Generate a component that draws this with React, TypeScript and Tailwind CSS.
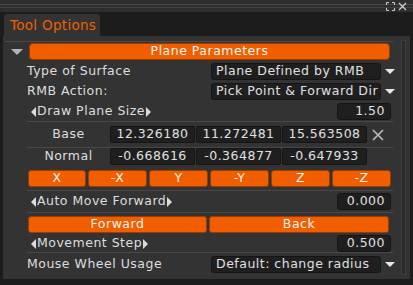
import React from "react";

const font = { fontFamily: "'DejaVu Sans', sans-serif" };

function Sep(props: { mt: string }) {
  return <div className={"ml-[24px] mr-[2px] h-px shrink-0 bg-[#484848] " + props.mt}></div>;
}

function Combo(props: { text: string }) {
  return (
    <div className="flex items-center">
      <div className="flex h-[17px] w-[170px] items-center rounded-[3px] border border-[#151515] bg-[#1f1f1f] pl-[4px] text-[12.5px] tracking-[0.5px] text-[#e0e0e0]">
        {props.text}
      </div>
      <div className="ml-[4px] h-0 w-0 border-x-[5px] border-t-[5px] border-x-transparent border-t-[#e8e8e8]"></div>
    </div>
  );
}

function Num(props: { text: string }) {
  return (
    <div className="flex h-[17px] w-[54px] items-center justify-end rounded-[3px] border border-[#151515] bg-[#1f1f1f] pr-[5px] text-[12.5px] tracking-[0.5px] text-[#e0e0e0]">
      {props.text}
    </div>
  );
}

function Arrow(props: { label: string }) {
  return (
    <div className="flex items-center">
      <span className="mr-[1px] h-0 w-0 border-y-[5px] border-r-[5px] border-y-transparent border-r-[#dcdcdc]"></span>
      <span>{props.label}</span>
      <span className="ml-[1px] h-0 w-0 border-y-[5px] border-l-[5px] border-y-transparent border-l-[#dcdcdc]"></span>
    </div>
  );
}

function Cell(props: { text: string }) {
  return (
    <div className="flex h-[17px] w-[85px] items-center justify-center rounded-[2px] border border-[#151515] bg-[#1f1f1f] text-[12.5px] tracking-[0.5px] text-[#e0e0e0]">
      {props.text}
    </div>
  );
}

function Btn(props: { text: string; w: string }) {
  return (
    <div
      className={
        "flex h-[17px] items-center justify-center rounded-[3px] border border-[#9c3d00] bg-[#f05e00] text-[12.5px] tracking-[0.5px] text-[#f4f4f4] " +
        props.w
      }>
      {props.text}
    </div>
  );
}

export default function App() {
  return (
    <div className="flex h-[285px] w-[413px] flex-col bg-[#1c1c1c]" style={font}>
      {/* title strip */}
      <div className="relative h-[12px] shrink-0 bg-[#2e2e2e]">
        <div className="absolute left-0 right-0 top-[4px] h-px bg-[#4a4a4a]"></div>
        <div className="absolute left-0 right-0 top-[7px] h-px bg-[#404040]"></div>
        <svg className="absolute left-[386px] top-[2px]" width="9" height="9" viewBox="0 0 9 9" fill="none" stroke="#cfcfcf" strokeWidth="1">
          <path d="M0.5 3V0.5H3M6 0.5H8.5V3M8.5 6V8.5H6M3 8.5H0.5V6" />
        </svg>
        <svg className="absolute left-[398px] top-[2px]" width="9" height="9" viewBox="0 0 9 9" fill="none" stroke="#cfcfcf" strokeWidth="1.2">
          <path d="M1 1L8 8M8 1L1 8" />
        </svg>
      </div>
      {/* tab row */}
      <div className="flex h-[24px] shrink-0 items-end pl-[4px]">
        <div className="flex h-[22px] w-[96px] items-center whitespace-nowrap rounded-t-[3px] bg-[#333333] pl-[6px] text-[13.5px] tracking-[0.3px] text-[#f06000]">
          Tool Options
        </div>
      </div>
      {/* panel */}
      <div className="mx-[3px] flex h-[243px] shrink-0 bg-[#333333] text-[12.5px] tracking-[0.5px] text-[#dedede]">
        <div className="flex flex-1 flex-col pt-[5px]">
          <div className="ml-[2px] mr-[2px] h-px shrink-0 bg-[#4a4a4a]"></div>
          {/* header */}
          <div className="mt-[1px] flex items-center">
            <div className="ml-[8px] mr-[6px] h-0 w-0 border-x-[6px] border-t-[6px] border-x-transparent border-t-[#b4b4b4]"></div>
            <div className="flex h-[17px] w-[361px] items-center justify-center rounded-[4px] border border-[#9c3d00] bg-[#f05e00] text-[#f6f6f6]">
              Plane Parameters
            </div>
          </div>
          <div className="mt-[3px] flex h-[17px] items-center justify-between pl-[24px]">
            <span>Type of Surface</span>
            <Combo text="Plane Defined by RMB" />
          </div>
          <div className="mt-[3px] flex h-[17px] items-center justify-between pl-[24px]">
            <span>RMB Action:</span>
            <Combo text="Pick Point & Forward Dir" />
          </div>
          <div className="mt-[3px] flex h-[17px] items-center justify-between pl-[28px] pr-[4px]">
            <Arrow label="Draw Plane Size" />
            <Num text="1.50" />
          </div>
          <Sep mt="mt-[1px]" />
          <div className="mt-[4px] flex h-[17px] items-center">
            <div className="w-[107px] pl-[24px] text-center">Base</div>
            <div className="flex gap-[1px]">
              <Cell text="12.326180" />
              <Cell text="11.272481" />
              <Cell text="15.563508" />
            </div>
            <svg className="ml-[5px]" width="12" height="12" viewBox="0 0 12 12" fill="none" stroke="#bdbdbd" strokeWidth="1.6">
              <path d="M1 1L11 11M11 1L1 11" />
            </svg>
          </div>
          <Sep mt="mt-[4px]" />
          <div className="flex h-[17px] items-center">
            <div className="w-[107px] pl-[24px] text-center">Normal</div>
            <div className="flex gap-[1px]">
              <Cell text="-0.668616" />
              <Cell text="-0.364877" />
              <Cell text="-0.647933" />
            </div>
          </div>
          <div className="mt-[5px] flex gap-[2px] pl-[25px]">
            <Btn text="X" w="w-[58px]" />
            <Btn text="-X" w="w-[59px]" />
            <Btn text="Y" w="w-[59px]" />
            <Btn text="-Y" w="w-[59px]" />
            <Btn text="Z" w="w-[59px]" />
            <Btn text="-Z" w="w-[59px]" />
          </div>
          <Sep mt="mt-[3px]" />
          <div className="mt-[2px] flex h-[17px] items-center justify-between pl-[28px] pr-[4px]">
            <Arrow label="Auto Move Forward" />
            <Num text="0.000" />
          </div>
          <Sep mt="mt-[2px]" />
          <div className="mt-[3px] flex gap-[2px] pl-[25px]">
            <Btn text="Forward" w="w-[179px]" />
            <Btn text="Back" w="w-[180px]" />
          </div>
          <div className="mt-[2px] flex h-[17px] items-center justify-between pl-[28px] pr-[4px]">
            <Arrow label="Movement Step" />
            <Num text="0.500" />
          </div>
          <Sep mt="mt-0" />
          <div className="mt-[3px] flex h-[17px] items-center justify-between pl-[24px]">
            <span>Mouse Wheel Usage</span>
            <Combo text="Default: change radius" />
          </div>
        </div>
        {/* scrollbar */}
        <div className="mb-[4px] ml-[6px] mr-[4px] mt-[4px] w-[5px] border border-[#3e3e3e] bg-[#2b2b2b]"></div>
      </div>
    </div>
  );
}
